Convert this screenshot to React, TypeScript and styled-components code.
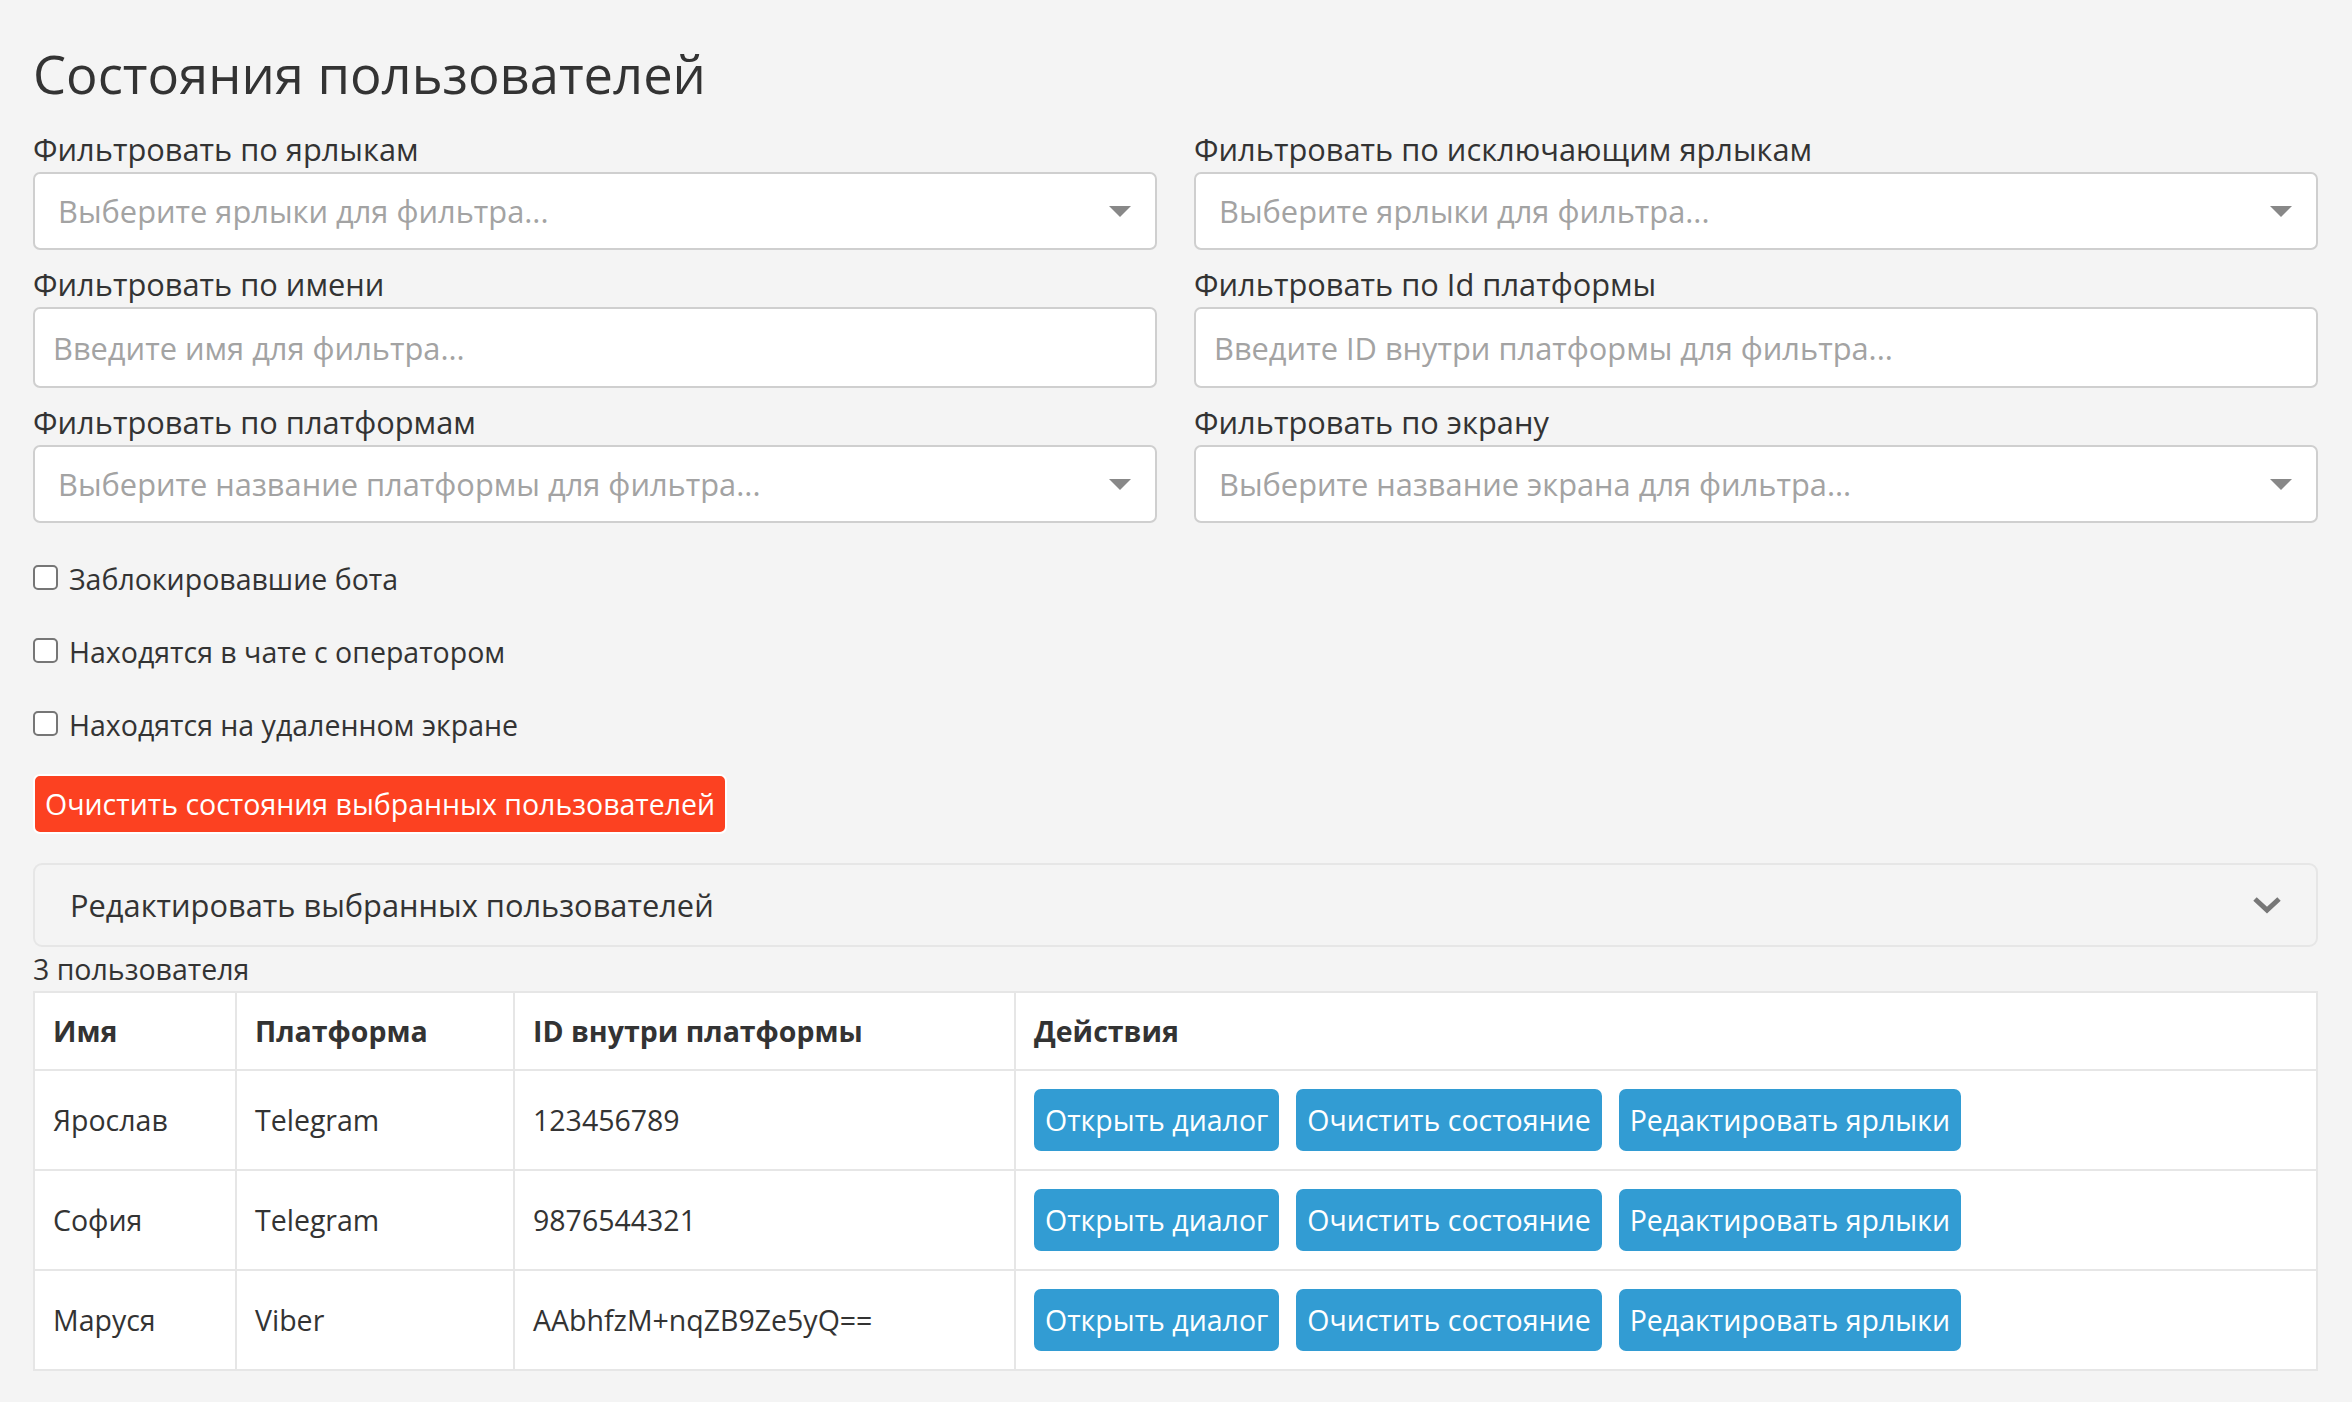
import React from "react";
import styled, { createGlobalStyle } from "styled-components";

const GlobalStyle = createGlobalStyle`
  body {
    margin: 0;
    background: #f4f4f4;
    font-family: "Open Sans", "Noto Sans", sans-serif;
    color: #333;
  }
`;

const Page = styled.div`
  padding: 41px 34px 40px 33px;
`;

const Title = styled.h1`
  font-size: 52.5px;
  font-weight: 400;
  line-height: 66px;
  margin: 0 0 24px 0;
`;

const FilterGrid = styled.div`
  display: grid;
  grid-template-columns: 1fr 1fr;
  column-gap: 37px;
  row-gap: 16px;
`;

const Field = styled.div`
  display: flex;
  flex-direction: column;
  gap: 5px;
`;

const Label = styled.label`
  font-size: 30.8px;
  line-height: 36px;
`;

const SelectBox = styled.div`
  height: 78px;
  box-sizing: border-box;
  background: #fff;
  border: 2px solid #cfcfcf;
  border-radius: 7px;
  display: flex;
  align-items: center;
  justify-content: space-between;
  padding: 0 24px 0 23px;
`;

const Placeholder = styled.span`
  font-size: 30.8px;
  color: #a3a3a3;
`;

const Caret = styled.span`
  width: 0;
  height: 0;
  border-left: 11px solid transparent;
  border-right: 11px solid transparent;
  border-top: 11px solid #888;
`;

const TextInput = styled.input`
  height: 81px;
  box-sizing: border-box;
  background: #fff;
  border: 2px solid #cfcfcf;
  border-radius: 7px;
  padding: 0 18px;
  font-family: inherit;
  font-size: 30.8px;
  color: #333;
  outline: none;

  &::placeholder {
    color: #a3a3a3;
  }
`;

const Checks = styled.div`
  display: flex;
  flex-direction: column;
  gap: 37px;
  margin-top: 38px;
`;

const CheckRow = styled.label`
  display: flex;
  align-items: center;
  gap: 11px;
  font-size: 28.5px;
  line-height: 36px;
`;

const CheckBox = styled.input`
  appearance: none;
  margin: 0 0 4px 0;
  width: 25px;
  height: 25px;
  box-sizing: border-box;
  border: 2px solid #767676;
  border-radius: 5px;
  background: #fff;
`;

const DangerButton = styled.button`
  margin-top: 31px;
  height: 60px;
  box-sizing: border-box;
  padding: 0 10px;
  background: #fc4121;
  color: #fff;
  border: 2px solid #fff;
  border-radius: 7px;
  font-family: inherit;
  font-size: 28.5px;
  cursor: pointer;
`;

const Accordion = styled.div`
  margin-top: 29px;
  height: 84px;
  box-sizing: border-box;
  border: 2px solid #e6e6e6;
  border-radius: 9px;
  display: flex;
  align-items: center;
  justify-content: space-between;
  padding: 0 34px 0 35px;
  font-size: 30.8px;
`;

const Count = styled.div`
  font-size: 28.5px;
  line-height: 44px;
`;

const Table = styled.table`
  width: 100%;
  border-collapse: collapse;
  background: #fff;
  table-layout: fixed;
  font-size: 28.5px;

  th,
  td {
    border: 2px solid #e6e6e6;
    text-align: left;
    padding: 0 18px;
  }

  th {
    height: 76px;
    font-weight: 700;
  }

  td {
    height: 98px;
  }
`;

const Actions = styled.div`
  display: flex;
  gap: 17px;
`;

const ActionButton = styled.button`
  height: 62px;
  padding: 0 11px;
  background: #329cd3;
  color: #fff;
  border: none;
  border-radius: 7px;
  font-family: inherit;
  font-size: 28.5px;
  cursor: pointer;
`;

const users = [
  { name: "Ярослав", platform: "Telegram", id: "123456789" },
  { name: "София", platform: "Telegram", id: "9876544321" },
  { name: "Маруся", platform: "Viber", id: "AAbhfzM+nqZB9Ze5yQ==" },
];

function Select({ placeholder }: { placeholder: string }) {
  return (
    <SelectBox>
      <Placeholder>{placeholder}</Placeholder>
      <Caret />
    </SelectBox>
  );
}

export default function App() {
  return (
    <Page>
      <GlobalStyle />
      <Title>Состояния пользователей</Title>
      <FilterGrid>
        <Field>
          <Label>Фильтровать по ярлыкам</Label>
          <Select placeholder="Выберите ярлыки для фильтра..." />
        </Field>
        <Field>
          <Label>Фильтровать по исключающим ярлыкам</Label>
          <Select placeholder="Выберите ярлыки для фильтра..." />
        </Field>
        <Field>
          <Label>Фильтровать по имени</Label>
          <TextInput placeholder="Введите имя для фильтра..." />
        </Field>
        <Field>
          <Label>Фильтровать по Id платформы</Label>
          <TextInput placeholder="Введите ID внутри платформы для фильтра..." />
        </Field>
        <Field>
          <Label>Фильтровать по платформам</Label>
          <Select placeholder="Выберите название платформы для фильтра..." />
        </Field>
        <Field>
          <Label>Фильтровать по экрану</Label>
          <Select placeholder="Выберите название экрана для фильтра..." />
        </Field>
      </FilterGrid>
      <Checks>
        <CheckRow>
          <CheckBox type="checkbox" />
          Заблокировавшие бота
        </CheckRow>
        <CheckRow>
          <CheckBox type="checkbox" />
          Находятся в чате с оператором
        </CheckRow>
        <CheckRow>
          <CheckBox type="checkbox" />
          Находятся на удаленном экране
        </CheckRow>
      </Checks>
      <DangerButton>Очистить состояния выбранных пользователей</DangerButton>
      <Accordion>
        <span>Редактировать выбранных пользователей</span>
        <svg width="30" height="20" viewBox="0 0 30 20">
          <path d="M3 4 L15 15 L27 4" fill="none" stroke="#777" strokeWidth="5" />
        </svg>
      </Accordion>
      <Count>3 пользователя</Count>
      <Table>
        <colgroup>
          <col style={{ width: 202 }} />
          <col style={{ width: 278 }} />
          <col style={{ width: 501 }} />
          <col />
        </colgroup>
        <thead>
          <tr>
            <th>Имя</th>
            <th>Платформа</th>
            <th>ID внутри платформы</th>
            <th>Действия</th>
          </tr>
        </thead>
        <tbody>
          {users.map((u) => (
            <tr key={u.id}>
              <td>{u.name}</td>
              <td>{u.platform}</td>
              <td>{u.id}</td>
              <td>
                <Actions>
                  <ActionButton>Открыть диалог</ActionButton>
                  <ActionButton>Очистить состояние</ActionButton>
                  <ActionButton>Редактировать ярлыки</ActionButton>
                </Actions>
              </td>
            </tr>
          ))}
        </tbody>
      </Table>
    </Page>
  );
}
